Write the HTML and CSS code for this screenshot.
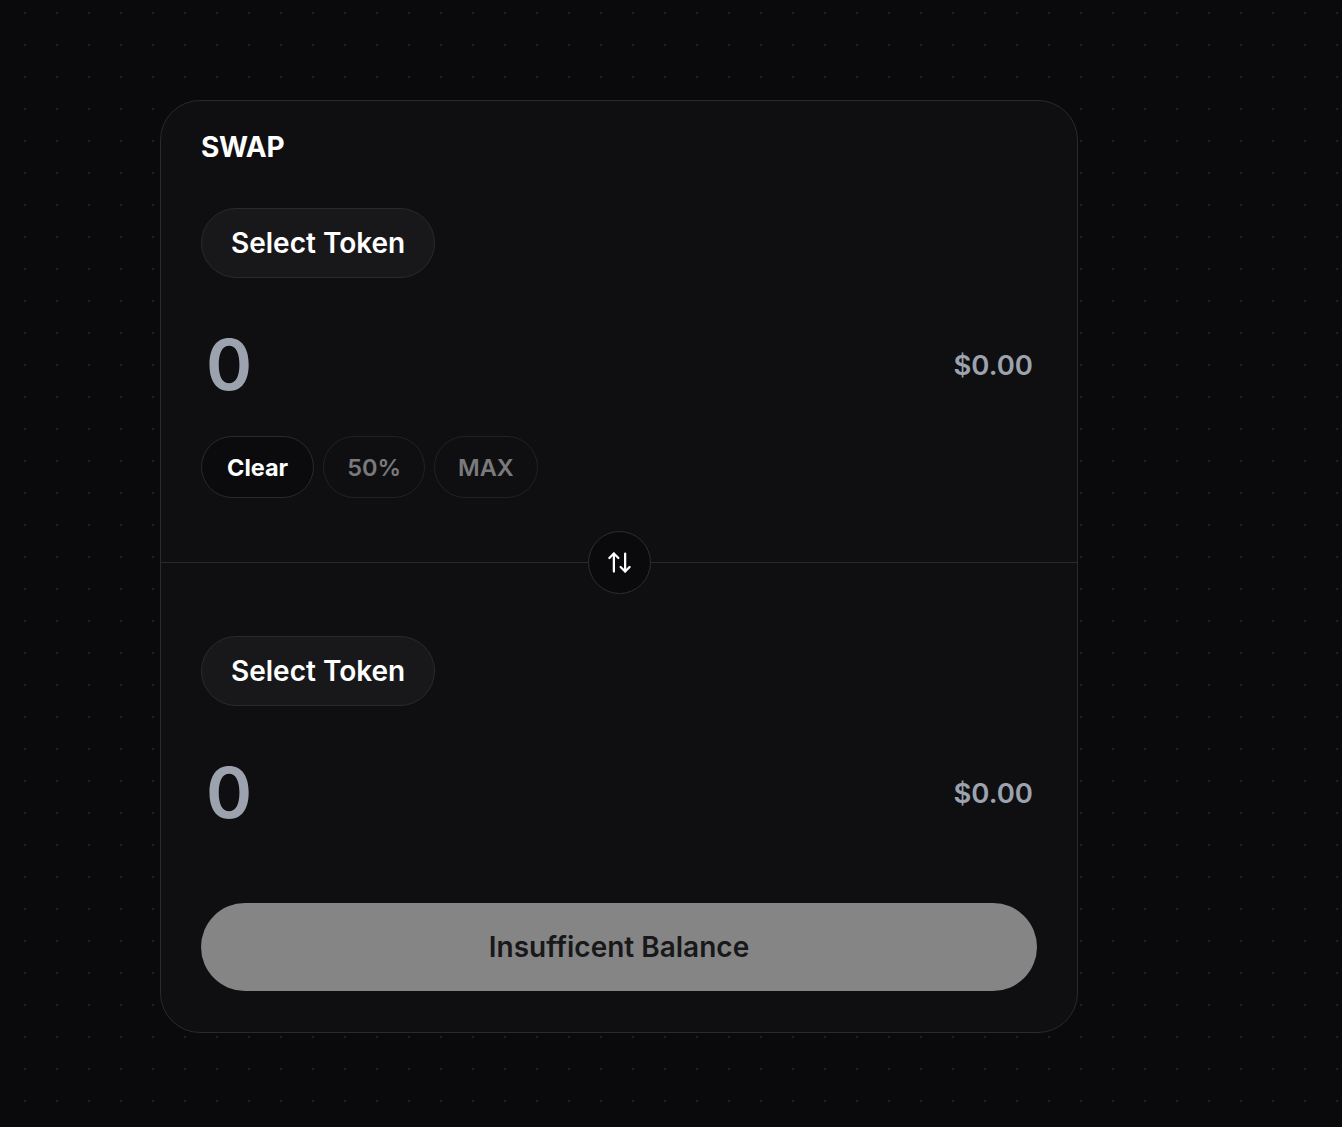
FILE: index.html
```html
<!DOCTYPE html>
<html lang="en">
<head>
<meta charset="utf-8">
<title>Swap</title>
<link rel="stylesheet" href="styles.css">
</head>
<body>
<main class="page">
  <section class="card">
    <div class="panel panel-top">
      <h1 class="title">SWAP</h1>
      <button class="token-btn">Select Token</button>
      <div class="amount-row">
        <span class="amount">0</span>
        <span class="usd">$0.00</span>
      </div>
      <div class="chips">
        <button class="chip chip-active">Clear</button>
        <button class="chip">50%</button>
        <button class="chip">MAX</button>
      </div>
    </div>
    <div class="divider">
      <button class="flip" aria-label="Switch tokens">
        <svg width="27" height="27" viewBox="0 0 24 24" fill="none" stroke="#ffffff" stroke-width="2" stroke-linecap="round" stroke-linejoin="round">
          <path d="m21 16-4 4-4-4"/><path d="M17 20V4"/><path d="m3 8 4-4 4 4"/><path d="M7 4v16"/>
        </svg>
      </button>
    </div>
    <div class="panel panel-bottom">
      <button class="token-btn">Select Token</button>
      <div class="amount-row">
        <span class="amount">0</span>
        <span class="usd">$0.00</span>
      </div>
      <button class="submit">Insufficent Balance</button>
    </div>
  </section>
</main>
</body>
</html>
```
FILE: styles.css
```css
* { box-sizing: border-box; }
html, body { margin: 0; padding: 0; }
body {
  background-color: #0a0a0c;
  background-image: radial-gradient(circle, #202024 1px, transparent 1.4px);
  background-size: 32px 32px;
  background-position: 9px -3px;
  min-height: 1127px;
  font-family: Inter, "Noto Sans", sans-serif;
  color: #fff;
}
.page {
  padding: 100px 0 0 160px;
}
.card {
  width: 918px;
  background: #0f0f11;
  border: 1px solid #2a2a2e;
  border-radius: 40px;
}
.panel {
  padding: 0 40px;
  display: flex;
  flex-direction: column;
  align-items: flex-start;
}
.panel-top { padding-top: 29px; padding-bottom: 64px; }
.panel-bottom { padding-top: 73px; padding-bottom: 41px; }
.title {
  margin: 0;
  font-size: 28px;
  line-height: 34px;
  font-weight: 700;
  letter-spacing: -0.3px;
}
.token-btn {
  margin-top: 44px;
  height: 70px;
  padding: 0 29px;
  border-radius: 999px;
  border: 1px solid #2a2a2e;
  background: #18181b;
  color: #fff;
  font-family: inherit;
  font-size: 28px;
  font-weight: 600;
}
.panel-bottom .token-btn { margin-top: 0; }
.amount-row {
  margin-top: 52px;
  width: 100%;
  height: 70px;
  display: flex;
  align-items: center;
  justify-content: space-between;
  padding: 0 4px 0 5px;
}
.amount {
  font-size: 70px;
  font-weight: 600;
  line-height: 70px;
  color: #9ca3af;
}
.usd {
  font-size: 27.5px;
  font-weight: 600;
  color: #9ca3af;
}
.chips {
  margin-top: 36px;
  display: flex;
  gap: 9px;
}
.chip {
  height: 62px;
  padding: 0 23px;
  border-radius: 999px;
  border: 1px solid #222225;
  background: transparent;
  color: #7a7a7d;
  font-family: inherit;
  font-size: 23.5px;
  font-weight: 600;
}
.chip-active {
  padding: 0 25px;
  color: #fff;
  background: #0b0b0d;
  border-color: #2a2a2e;
  font-weight: 700;
}
.divider {
  height: 1px;
  background: #2a2a2e;
  display: flex;
  justify-content: center;
  align-items: center;
}
.flip {
  width: 63px;
  height: 63px;
  border-radius: 50%;
  border: 1px solid #2e2e32;
  background: #0a0a0c;
  display: flex;
  align-items: center;
  justify-content: center;
  padding: 0;
  flex: none;
}
.submit {
  margin-top: 75px;
  width: 100%;
  height: 88px;
  border: none;
  border-radius: 999px;
  background: #858585;
  color: #18181a;
  font-family: inherit;
  font-size: 28px;
  font-weight: 600;
}
```
